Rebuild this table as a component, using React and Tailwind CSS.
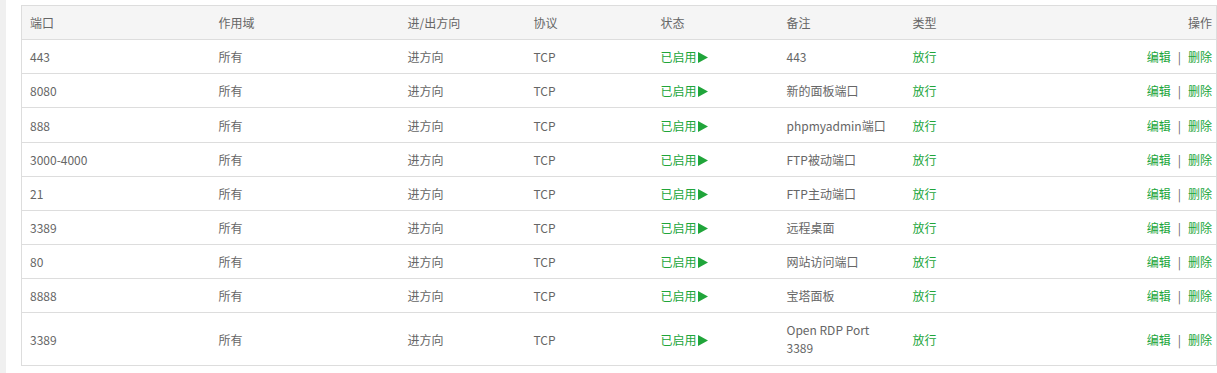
import React from "react";

const rows = [
  { port: "443", remark: "443" },
  { port: "8080", remark: "新的面板端口" },
  { port: "888", remark: "phpmyadmin端口", tall: true },
  { port: "3000-4000", remark: "FTP被动端口" },
  { port: "21", remark: "FTP主动端口" },
  { port: "3389", remark: "远程桌面" },
  { port: "80", remark: "网站访问端口" },
  { port: "8888", remark: "宝塔面板" },
  { port: "3389", remark: "Open RDP Port 3389", wrap: true },
];

const Play = () => (
  <svg width="10" height="11" viewBox="0 0 10 11" className="inline-block ml-[1px] align-[-1px]">
    <path d="M0 0 L10 5.5 L0 11 Z" fill="#20a53a" />
  </svg>
);

const App = () => {
  return (
    <div
      className="flex w-[1217px] h-[373px] bg-white text-[12px] text-[#666] overflow-hidden"
      style={{ fontFamily: '"Noto Sans CJK SC", "Noto Sans", sans-serif' }}
    >
      <div className="w-[6px] shrink-0 bg-[#f0f0f0]" />
      <div className="pl-[15px] pt-[5px]">
        <table className="w-[1196px] table-fixed border-collapse border border-[#ddd]">
          <colgroup>
            <col className="w-[189px]" />
            <col className="w-[189px]" />
            <col className="w-[126px]" />
            <col className="w-[127px]" />
            <col className="w-[126px]" />
            <col className="w-[126px]" />
            <col />
          </colgroup>
          <thead>
            <tr className="bg-[#f5f5f5] border-b border-[#ddd]">
              <th className="h-[34px] pl-[8px] text-left font-normal">端口</th>
              <th className="pl-[8px] text-left font-normal">作用域</th>
              <th className="pl-[8px] text-left font-normal">进/出方向</th>
              <th className="pl-[8px] text-left font-normal">协议</th>
              <th className="pl-[8px] text-left font-normal">状态</th>
              <th className="pl-[8px] text-left font-normal">备注</th>
              <th className="pl-[8px] text-left font-normal">类型</th>
              <th className="pr-[4px] text-right font-normal">操作</th>
            </tr>
          </thead>
          <tbody>
            {rows.map((r, i) => (
              <tr key={i} className="border-b border-[#ddd] leading-[17px]">
                <td className={`${r.tall ? "h-[35px]" : "h-[34px]"} pl-[8px] py-[8px]`}>{r.port}</td>
                <td className="pl-[8px]">所有</td>
                <td className="pl-[8px]">进方向</td>
                <td className="pl-[8px]">TCP</td>
                <td className="pl-[8px] text-[#20a53a]">
                  已启用<Play />
                </td>
                <td className={`pl-[8px] pr-[14px] py-[8px] ${r.wrap ? "leading-[18px]" : ""}`}>{r.remark}</td>
                <td className="pl-[8px] text-[#20a53a]">放行</td>
                <td className="pr-[4px] text-right">
                  <span className="text-[#20a53a]">编辑</span>
                  <span className="mx-[7px] text-[#666]">|</span>
                  <span className="text-[#20a53a]">删除</span>
                </td>
              </tr>
            ))}
          </tbody>
        </table>
      </div>
    </div>
  );
};

export default App;
